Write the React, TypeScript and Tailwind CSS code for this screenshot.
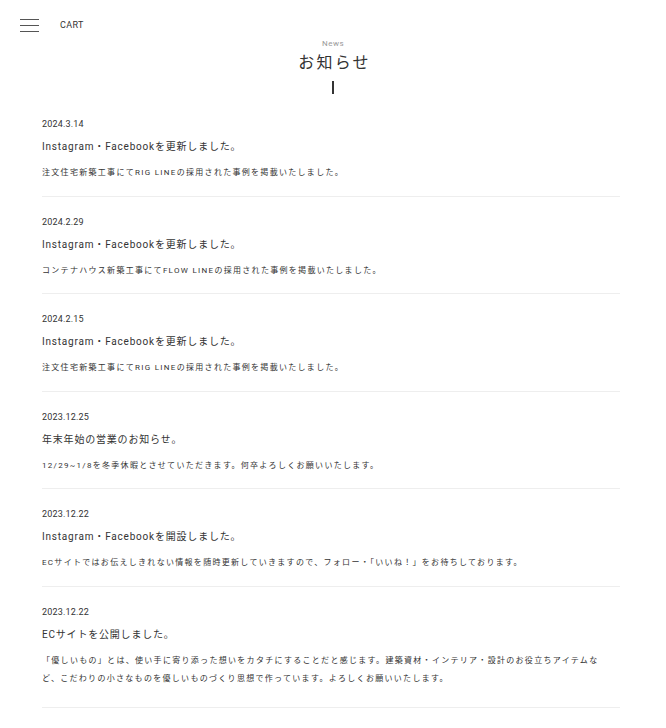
const news = [
  {
    date: "2024.3.14",
    title: "Instagram・Facebookを更新しました。",
    body: ["注文住宅新築工事にてRIG LINEの採用された事例を掲載いたしました。"],
  },
  {
    date: "2024.2.29",
    title: "Instagram・Facebookを更新しました。",
    body: ["コンテナハウス新築工事にてFLOW LINEの採用された事例を掲載いたしました。"],
  },
  {
    date: "2024.2.15",
    title: "Instagram・Facebookを更新しました。",
    body: ["注文住宅新築工事にてRIG LINEの採用された事例を掲載いたしました。"],
  },
  {
    date: "2023.12.25",
    title: "年末年始の営業のお知らせ。",
    body: ["12/29~1/8を冬季休暇とさせていただきます。何卒よろしくお願いいたします。"],
  },
  {
    date: "2023.12.22",
    title: "Instagram・Facebookを開設しました。",
    body: [
      "ECサイトではお伝えしきれない情報を随時更新していきますので、フォロー・「いいね！」をお待ちしております。",
    ],
  },
  {
    date: "2023.12.22",
    title: "ECサイトを公開しました。",
    body: [
      "「優しいもの」とは、使い手に寄り添った想いをカタチにすることだと感じます。建築資材・インテリア・設計のお役立ちアイテムな",
      "ど、こだわりの小さなものを優しいものづくり思想で作っています。よろしくお願いいたします。",
    ],
  },
];

export default function App() {
  return (
    <div className="min-h-[728px] bg-white font-['Roboto','Noto_Sans_CJK_JP',sans-serif] text-[#333]">
      <header className="flex h-[52px] items-center px-[20px] pb-[1px]">
        <button className="flex w-[19px] flex-col gap-[5px]" aria-label="menu">
          <span className="block h-px w-full bg-[#555]" />
          <span className="block h-px w-full bg-[#555]" />
          <span className="block h-px w-full bg-[#555]" />
        </button>
        <span className="ml-[21px] text-[9px] tracking-[0.04em] text-[#333]">CART</span>
      </header>

      <div className="-mt-[14px] flex flex-col items-center">
        <p className="text-[8px] leading-[12px] tracking-[0.06em] text-[#999]">News</p>
        <h1 className="mt-[2px] pl-[3px] text-[16px] leading-[22px] tracking-[0.14em] text-[#333]">
          お知らせ
        </h1>
        <span className="mt-[7px] block h-[13px] w-[2px] bg-[#333]" />
      </div>

      <ul className="ml-[42px] mr-[46px] mt-[5px]">
        {news.map((n, i) => (
          <li
            key={i}
            className="border-b border-[#eeeeee] pb-[13.6px] pt-[18px] last:pb-[19px]"
          >
            <p className="text-[9px] leading-[14px] tracking-[0.02em] text-[#333]">{n.date}</p>
            <h2 className="mt-[8px] text-[10px] leading-[16px] tracking-[0.08em] text-[#333]">
              {n.title}
            </h2>
            <div className="mt-[9px] whitespace-nowrap text-[8px] leading-[18px] tracking-[1.3px] text-[#333]">
              {n.body.map((b, j) => (
                <p key={j}>{b}</p>
              ))}
            </div>
          </li>
        ))}
      </ul>
    </div>
  );
}
